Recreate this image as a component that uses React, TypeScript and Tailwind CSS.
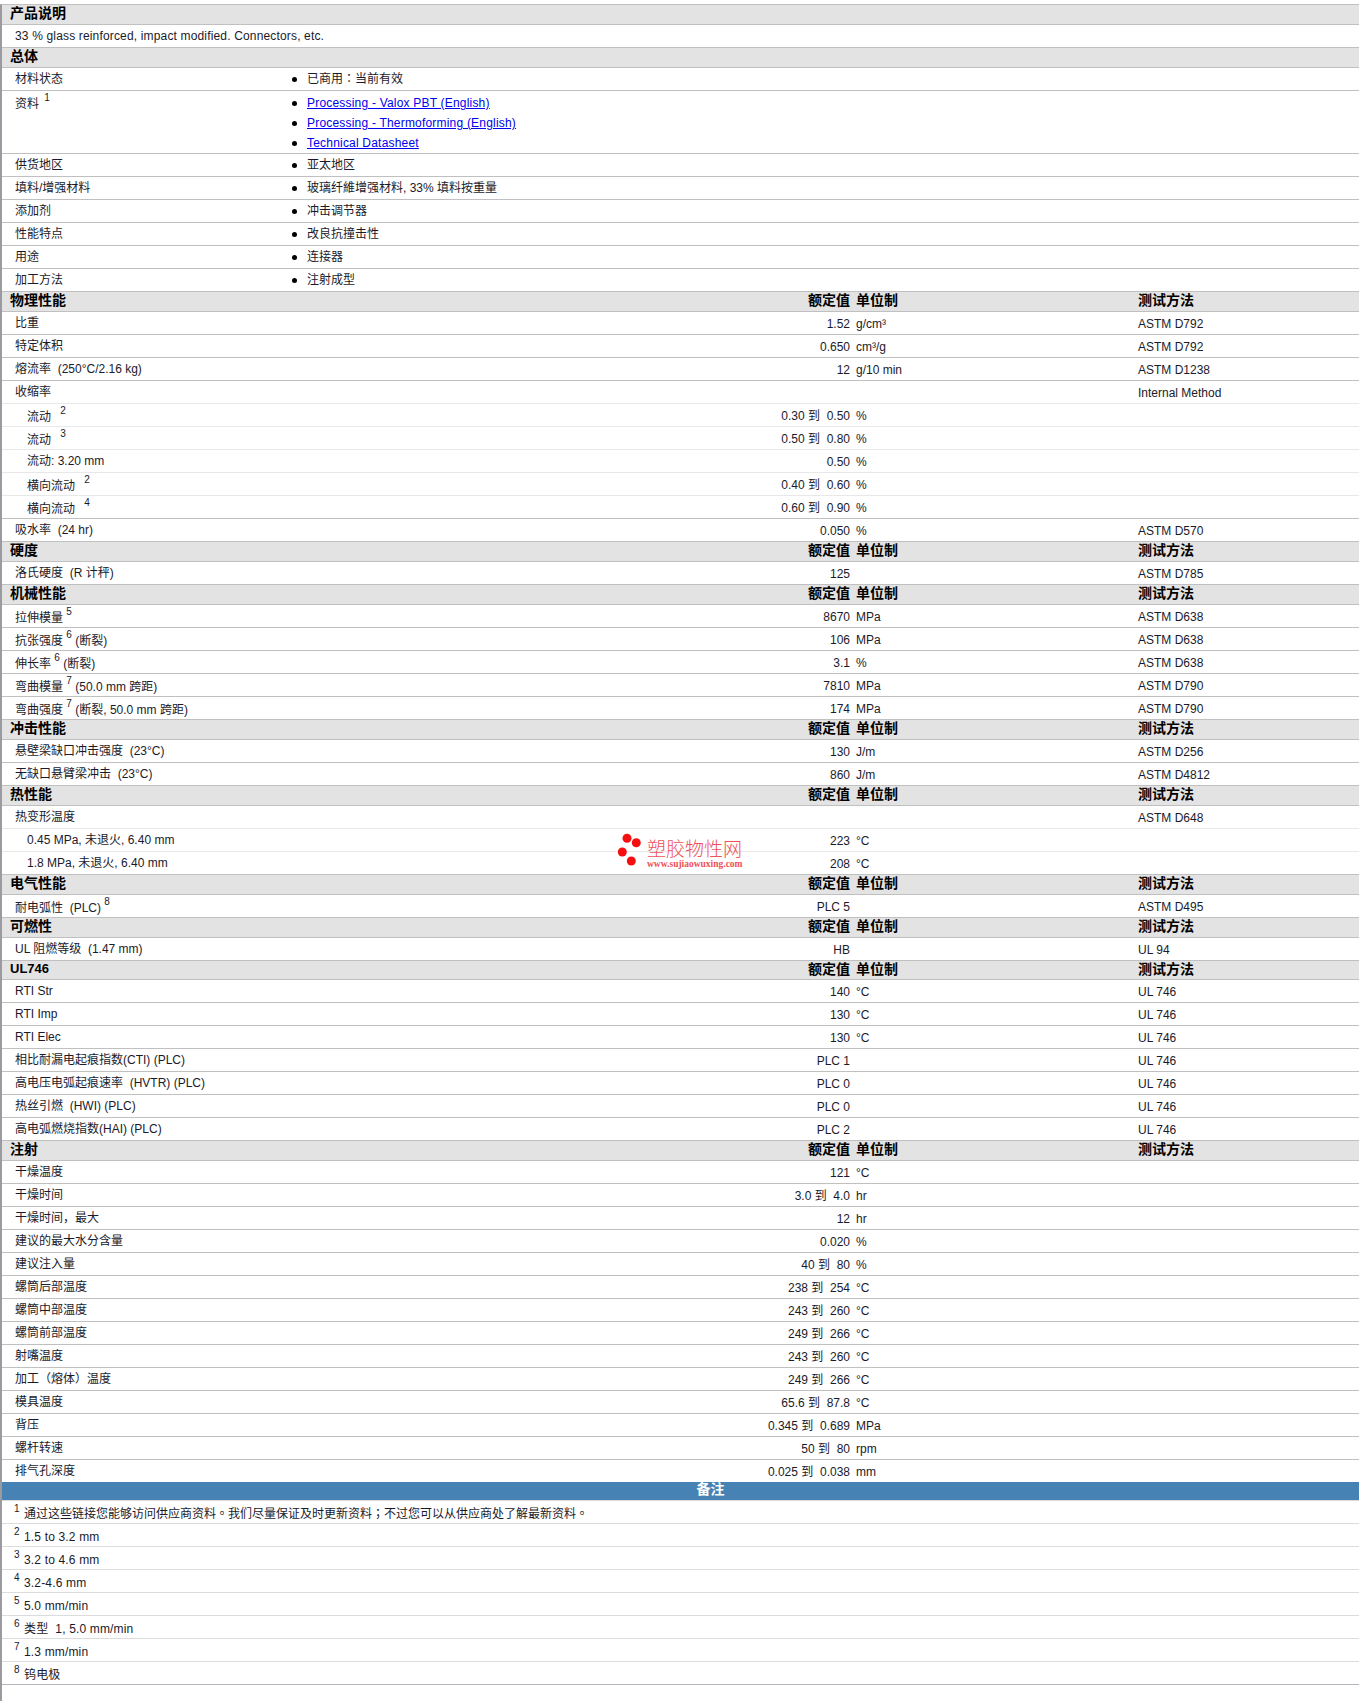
import type { FC, ReactNode } from 'react';

type Row = {
  label: ReactNode;
  value?: string;
  unit?: string;
  method?: string;
  sub?: boolean;
  soft?: boolean;
};

type Group = { title: string; rows: Row[] };

const Sup: FC<{ n: number; className?: string }> = ({ n, className }) => (
  <sup className={`relative -top-[7px] align-baseline text-[10px] ${className ?? ''}`}>{n}</sup>
);

const Punct: FC<{ children: string }> = ({ children }) => (
  <span className="font-['Noto_Sans_CJK_TC',sans-serif] leading-none">{children}</span>
);

const groups: Group[] = [
  {
    title: '物理性能',
    rows: [
      { label: '比重', value: '1.52', unit: 'g/cm³', method: 'ASTM D792' },
      { label: '特定体积', value: '0.650', unit: 'cm³/g', method: 'ASTM D792' },
      { label: '熔流率  (250°C/2.16 kg)', value: '12', unit: 'g/10 min', method: 'ASTM D1238' },
      { label: '收缩率', method: 'Internal Method', soft: true },
      { label: <>流动 <Sup n={2} className="ml-[6px]" /></>, value: '0.30 到  0.50', unit: '%', sub: true, soft: true },
      { label: <>流动 <Sup n={3} className="ml-[6px]" /></>, value: '0.50 到  0.80', unit: '%', sub: true, soft: true },
      { label: '流动: 3.20 mm', value: '0.50', unit: '%', sub: true, soft: true },
      { label: <>横向流动 <Sup n={2} className="ml-[6px]" /></>, value: '0.40 到  0.60', unit: '%', sub: true, soft: true },
      { label: <>横向流动 <Sup n={4} className="ml-[6px]" /></>, value: '0.60 到  0.90', unit: '%', sub: true },
      { label: '吸水率  (24 hr)', value: '0.050', unit: '%', method: 'ASTM D570' },
    ],
  },
  {
    title: '硬度',
    rows: [{ label: '洛氏硬度  (R 计秤)', value: '125', method: 'ASTM D785' }],
  },
  {
    title: '机械性能',
    rows: [
      { label: <>拉伸模量 <Sup n={5} /></>, value: '8670', unit: 'MPa', method: 'ASTM D638' },
      { label: <>抗张强度 <Sup n={6} /> (断裂)</>, value: '106', unit: 'MPa', method: 'ASTM D638' },
      { label: <>伸长率 <Sup n={6} /> (断裂)</>, value: '3.1', unit: '%', method: 'ASTM D638' },
      { label: <>弯曲模量 <Sup n={7} /> (50.0 mm 跨距)</>, value: '7810', unit: 'MPa', method: 'ASTM D790' },
      { label: <>弯曲强度 <Sup n={7} /> (断裂, 50.0 mm 跨距)</>, value: '174', unit: 'MPa', method: 'ASTM D790' },
    ],
  },
  {
    title: '冲击性能',
    rows: [
      { label: '悬壁梁缺口冲击强度  (23°C)', value: '130', unit: 'J/m', method: 'ASTM D256' },
      { label: '无缺口悬臂梁冲击  (23°C)', value: '860', unit: 'J/m', method: 'ASTM D4812' },
    ],
  },
  {
    title: '热性能',
    rows: [
      { label: '热变形温度', method: 'ASTM D648', soft: true },
      { label: '0.45 MPa, 未退火, 6.40 mm', value: '223', unit: '°C', sub: true, soft: true },
      { label: '1.8 MPa, 未退火, 6.40 mm', value: '208', unit: '°C', sub: true },
    ],
  },
  {
    title: '电气性能',
    rows: [{ label: <>耐电弧性  (PLC) <Sup n={8} /></>, value: 'PLC 5', method: 'ASTM D495' }],
  },
  {
    title: '可燃性',
    rows: [{ label: 'UL 阻燃等级  (1.47 mm)', value: 'HB', method: 'UL 94' }],
  },
  {
    title: 'UL746',
    rows: [
      { label: 'RTI Str', value: '140', unit: '°C', method: 'UL 746' },
      { label: 'RTI Imp', value: '130', unit: '°C', method: 'UL 746' },
      { label: 'RTI Elec', value: '130', unit: '°C', method: 'UL 746' },
      { label: '相比耐漏电起痕指数(CTI) (PLC)', value: 'PLC 1', method: 'UL 746' },
      { label: '高电压电弧起痕速率  (HVTR) (PLC)', value: 'PLC 0', method: 'UL 746' },
      { label: '热丝引燃  (HWI) (PLC)', value: 'PLC 0', method: 'UL 746' },
      { label: '高电弧燃烧指数(HAI) (PLC)', value: 'PLC 2', method: 'UL 746' },
    ],
  },
  {
    title: '注射',
    rows: [
      { label: '干燥温度', value: '121', unit: '°C' },
      { label: '干燥时间', value: '3.0 到  4.0', unit: 'hr' },
      { label: '干燥时间，最大', value: '12', unit: 'hr' },
      { label: '建议的最大水分含量', value: '0.020', unit: '%' },
      { label: '建议注入量', value: '40 到  80', unit: '%' },
      { label: '螺筒后部温度', value: '238 到  254', unit: '°C' },
      { label: '螺筒中部温度', value: '243 到  260', unit: '°C' },
      { label: '螺筒前部温度', value: '249 到  266', unit: '°C' },
      { label: '射嘴温度', value: '243 到  260', unit: '°C' },
      { label: '加工（熔体）温度', value: '249 到  266', unit: '°C' },
      { label: '模具温度', value: '65.6 到  87.8', unit: '°C' },
      { label: '背压', value: '0.345 到  0.689', unit: 'MPa' },
      { label: '螺杆转速', value: '50 到  80', unit: 'rpm' },
      { label: '排气孔深度', value: '0.025 到  0.038', unit: 'mm' },
    ],
  },
];

const linkClass = 'text-[#0000ee] underline tracking-[0.2px]';

const general: { label: ReactNode; items: ReactNode[] }[] = [
  { label: '材料状态', items: [<>已商用<Punct>：</Punct>当前有效</>] },
  {
    label: <>资料 <Sup n={1} className="ml-[2px]" /></>,
    items: [
      <a className={linkClass} href="#">Processing - Valox PBT (English)</a>,
      <a className={linkClass} href="#">Processing - Thermoforming (English)</a>,
      <a className={linkClass} href="#">Technical Datasheet</a>,
    ],
  },
  { label: '供货地区', items: ['亚太地区'] },
  { label: '填料/增强材料', items: ['玻璃纤維增强材料, 33% 填料按重量'] },
  { label: '添加剂', items: ['冲击调节器'] },
  { label: '性能特点', items: ['改良抗撞击性'] },
  { label: '用途', items: ['连接器'] },
  { label: '加工方法', items: ['注射成型'] },
];

const notes: ReactNode[] = [
  <>通过这些链接您能够访问供应商资料<Punct>。</Punct>我们尽量保证及时更新资料<Punct>；</Punct>不过您可以从供应商处了解最新资料<Punct>。</Punct></>,
  '1.5 to 3.2 mm',
  '3.2 to 4.6 mm',
  '3.2-4.6 mm',
  '5.0 mm/min',
  '类型  1, 5.0 mm/min',
  '1.3 mm/min',
  '钨电极',
];

const sectionBg =
  'bg-[#e3e3e3] bg-[radial-gradient(#dcdcdc_0.5px,transparent_0.6px)] bg-[length:6px_6px]';

const SectionTitle: FC<{ title: string; columns?: boolean }> = ({ title, columns }) => (
  <div
    className={`grid grid-cols-[298px_550px_288px_1fr] items-center border-b border-[#c0c0c0] pb-[3px] leading-[16px] font-bold text-black ${sectionBg} ${
      title === 'UL746' ? 'h-[19px]' : 'h-[20px]'
    }`}
  >
    <div className={`pl-2 ${title === 'UL746' ? 'text-[13px]' : 'text-[14px]'}`}>{title}</div>
    <div className="text-right text-[14px]">{columns && '额定值'}</div>
    <div className="pl-[6px] text-[14px]">{columns && '单位制'}</div>
    <div className="text-[14px]">{columns && '测试方法'}</div>
  </div>
);

const DataRow: FC<{ row: Row }> = ({ row }) => (
  <div
    className={`grid h-[23px] grid-cols-[298px_550px_288px_1fr] items-center border-b leading-[18px] whitespace-pre ${
      row.soft ? 'border-[#e8e8e8]' : 'border-[#c0c0c0]'
    }`}
  >
    <div
      className={`${row.sub ? 'pl-[25px]' : 'pl-[13px]'} ${typeof row.label === 'string' ? '' : 'pt-[4px]'}`}
    >
      {row.label}
    </div>
    <div className="pt-[2px] text-right">{row.value}</div>
    <div className="pt-[2px] pl-[6px]">{row.unit}</div>
    <div className="pt-[2px]">{row.method}</div>
  </div>
);

const Watermark: FC = () => (
  <div className="absolute top-[832px] left-[617px] flex items-start gap-[6px]">
    <svg width="24" height="34" viewBox="0 0 24 34" className="text-[#f50f0f]">
      <circle cx="10" cy="6.3" r="4.5" fill="currentColor" />
      <circle cx="19.3" cy="10.7" r="4.5" fill="currentColor" />
      <circle cx="5.3" cy="20" r="4.5" fill="currentColor" />
      <circle cx="14.3" cy="29" r="4.5" fill="currentColor" />
    </svg>
    <div className="flex flex-col pt-[8px] text-[#ef5159]">
      <span className="text-[19px] leading-[20px] font-light">塑胶物性网</span>
      <span className="font-['Liberation_Serif',serif] text-[9.5px] leading-[9px] font-bold">
        www.sujiaowuxing.com
      </span>
    </div>
  </div>
);

export default function App() {
  return (
    <div className="relative min-h-[1701px] bg-white pt-[4px] font-['Liberation_Sans','Noto_Sans_CJK_SC',sans-serif] text-[12px] text-[#1a1a2a]">
      <div className="min-h-[1697px] border-t border-l-2 border-t-[#c0c0c0] border-l-[#9a9aa0]">
        <SectionTitle title="产品说明" />
        <div className="flex h-[23px] items-center border-b border-[#c0c0c0] pl-[13px] tracking-[0.16px]">
          33 % glass reinforced, impact modified. Connectors, etc.
        </div>

        <SectionTitle title="总体" />
        {general.map((item, i) => (
          <div
            key={i}
            className={`grid grid-cols-[290px_1fr] border-b border-[#c0c0c0] leading-[20px] ${
              item.items.length > 1 ? 'pt-[2px]' : 'py-[1px]'
            }`}
          >
            <div className={`pl-[13px] ${item.items.length > 1 ? 'pt-[1px]' : ''}`}>{item.label}</div>
            <ul>
              {item.items.map((content, j) => (
                <li key={j} className="flex items-center gap-[10px]">
                  <span className="size-[5px] rounded-full bg-black" />
                  <span>{content}</span>
                </li>
              ))}
            </ul>
          </div>
        ))}

        {groups.map((group) => (
          <div key={group.title}>
            <SectionTitle title={group.title} columns />
            {group.rows.map((row, i) => (
              <DataRow key={i} row={row} />
            ))}
          </div>
        ))}

        <div className="relative -mt-px h-[18px] bg-[#4682b4] pl-[60px] text-center text-[14px] leading-[15px] font-bold text-white">
          备注
        </div>
        <div className="border-t border-[#dcdcdc]" />
        {notes.map((note, i) => (
          <div
            key={i}
            className={`flex h-[23px] items-center border-b pl-3 whitespace-pre ${
              i === notes.length - 1 ? 'border-[#b4b4bc]' : 'border-[#dcdcdc]'
            }`}
          >
            <sup className="relative -top-[3px] w-[10px] align-baseline text-[10px]">{i + 1}</sup>
            <span className={`pt-[4px] ${typeof note === 'string' ? 'tracking-[0.16px]' : ''}`}>{note}</span>
          </div>
        ))}
      </div>
      <Watermark />
    </div>
  );
}
